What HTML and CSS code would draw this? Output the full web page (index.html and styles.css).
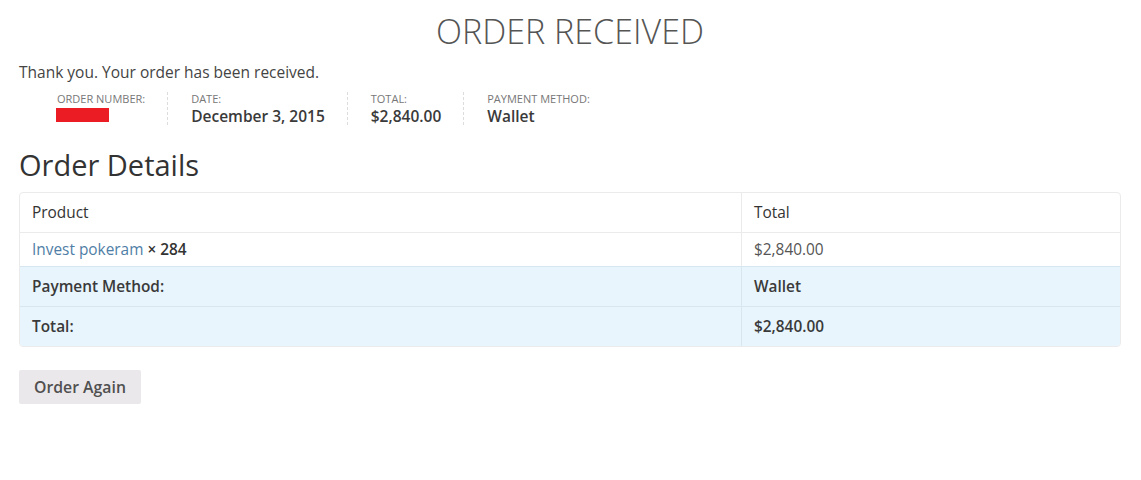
FILE: index.html
```html
<!DOCTYPE html>
<html>
<head>
<meta charset="utf-8">
<link rel="stylesheet" href="styles.css">
</head>
<body>
<div class="page">
  <h1 class="title">ORDER RECEIVED</h1>
  <p class="thanks">Thank you. Your order has been received.</p>
  <ul class="overview">
    <li class="ov-item"><span class="ov-label">Order number:</span><span class="redact"></span></li>
    <li class="ov-item"><span class="ov-label">Date:</span><strong class="ov-value">December 3, 2015</strong></li>
    <li class="ov-item"><span class="ov-label">Total:</span><strong class="ov-value">$2,840.00</strong></li>
    <li class="ov-item last"><span class="ov-label">Payment method:</span><strong class="ov-value">Wallet</strong></li>
  </ul>
  <h2 class="details-title">Order Details</h2>
  <table class="order-table">
    <thead>
      <tr><th class="col-product">Product</th><th class="col-total">Total</th></tr>
    </thead>
    <tbody>
      <tr><td class="col-product"><a class="prod-link" href="#">Invest pokeram</a> <strong class="qty">× 284</strong></td><td class="col-total price">$2,840.00</td></tr>
    </tbody>
    <tfoot>
      <tr><th class="col-product">Payment Method:</th><td class="col-total">Wallet</td></tr>
      <tr class="last-row"><th class="col-product">Total:</th><td class="col-total">$2,840.00</td></tr>
    </tfoot>
  </table>
  <div class="actions"><a class="btn" href="#">Order Again</a></div>
</div>
</body>
</html>
```
FILE: styles.css
```css
* { box-sizing: border-box; }
html, body { margin: 0; padding: 0; background: #fff; }
body {
  font-family: "Open Sans", "Liberation Sans", sans-serif;
  color: #333;
  font-size: 15.4px;
}
.page { padding: 0 20px 0 19px; }
.title {
  margin: 0;
  padding-top: 8px;
  font-weight: 300;
  font-size: 34px;
  line-height: 46px;
  text-align: center;
  color: #555;
  letter-spacing: 0;
}
.thanks {
  margin: 8px 0 0;
  font-size: 15.5px;
  line-height: 21px;
  color: #444;
}
.overview {
  list-style: none;
  margin: 9px 0 0;
  padding: 0 0 0 38px;
  display: flex;
}
.ov-item {
  display: flex;
  flex-direction: column;
  padding-right: 22px;
  margin-right: 23px;
  border-right: 1px dashed #ddd;
  height: 33px;
}
.ov-item.last { border-right: 0; }
.ov-label {
  text-transform: uppercase;
  font-size: 11px;
  line-height: 14px;
  color: #777;
  letter-spacing: 0;
}
.ov-value {
  font-weight: 600;
  font-size: 15.5px;
  line-height: 20px;
  color: #3a3a3a;
}
.redact {
  display: block;
  width: 53px;
  height: 14px;
  margin-top: 2px;
  margin-left: -1px;
  background: #ec1c24;
}
.details-title {
  margin: 21px 0 0;
  font-weight: 400;
  font-size: 29px;
  line-height: 38px;
  color: #333;
}
.order-table {
  margin-top: 8px;
  width: 100%;
  border-collapse: separate;
  border-spacing: 0;
  border: 1px solid #ebebeb;
  border-radius: 4px;
  overflow: hidden;
  font-size: 15.4px;
}
.order-table th, .order-table td {
  text-align: left;
  padding: 0 12px;
  vertical-align: middle;
}
.order-table thead th {
  height: 40px;
  font-weight: 400;
  color: #333;
  border-bottom: 1px solid #ebebeb;
}
.order-table tbody td {
  height: 33px;
}
.col-product { width: 722px; border-right: 1px solid #ebebeb; }
.prod-link { color: #4f7ea6; text-decoration: none; }
.qty { font-weight: 600; color: #333; }
.price { color: #555; }
.order-table tfoot th, .order-table tfoot td {
  background: #e8f5fd;
  height: 40px;
  font-weight: 600;
  color: #3a3a3a;
  border-top: 1px solid #d8e6ef;
}
.order-table tfoot .col-product { border-right: 1px solid #d8e6ef; }
.actions { margin-top: 23px; }
.btn {
  display: inline-block;
  background: #ebe8eb;
  color: #505050;
  font-weight: 600;
  font-size: 15.8px;
  line-height: 34px;
  padding: 0 15px;
  border-radius: 2px;
  text-decoration: none;
}
```
